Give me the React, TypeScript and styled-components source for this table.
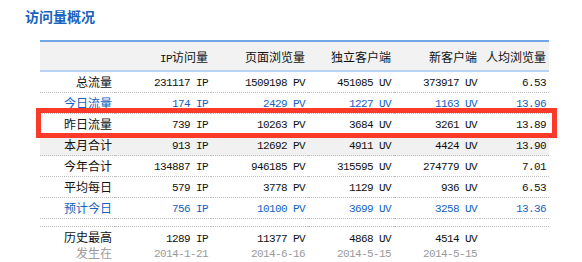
import styled, { createGlobalStyle } from "styled-components";

const GlobalStyle = createGlobalStyle`
  body {
    margin: 0;
    background: #ffffff;
    font-family: "Noto Sans CJK SC", "Liberation Sans", sans-serif;
    color: #111111;
  }
`;

type Tone = "normal" | "blue" | "shade";

interface IRow {
  label: string;
  ip: string;
  pv: string;
  uv: string;
  nuv: string;
  avg: string;
  tone: Tone;
}

const rows: IRow[] = [
  { label: "总流量", ip: "231117", pv: "1509198", uv: "451085", nuv: "373917", avg: "6.53", tone: "normal" },
  { label: "今日流量", ip: "174", pv: "2429", uv: "1227", nuv: "1163", avg: "13.96", tone: "blue" },
  { label: "昨日流量", ip: "739", pv: "10263", uv: "3684", nuv: "3261", avg: "13.89", tone: "normal" },
  { label: "本月合计", ip: "913", pv: "12692", uv: "4911", nuv: "4424", avg: "13.90", tone: "shade" },
  { label: "今年合计", ip: "134887", pv: "946185", uv: "315595", nuv: "274779", avg: "7.01", tone: "normal" },
  { label: "平均每日", ip: "579", pv: "3778", uv: "1129", nuv: "936", avg: "6.53", tone: "normal" },
  { label: "预计今日", ip: "756", pv: "10100", uv: "3699", nuv: "3258", avg: "13.36", tone: "blue" },
];

const Page = styled.div`
  padding: 7px 0 0 25px;
`;

const Title = styled.h2`
  margin: 0;
  font-size: 14px;
  line-height: 18px;
  font-weight: 700;
  color: #1763be;
`;

const TableWrap = styled.div`
  position: relative;
  margin: 15px 0 0 15px;
  width: 509px;
`;

const Table = styled.table`
  width: 509px;
  border-collapse: collapse;
  table-layout: fixed;
  font-size: 12px;
`;

const HeadRow = styled.tr`
  background: #f2f2f2;
  border-top: 2px solid #72a7ea;
  border-bottom: 2px solid #b9d3f2;
`;

const Th = styled.th`
  height: 28px;
  padding: 0 3px 0 0;
  text-align: right;
  font-weight: 400;
  white-space: nowrap;
`;

const Row = styled.tr<{ $tone: Tone }>`
  border-bottom: 1px dotted #bdbdbd;
  background: ${(p) => (p.$tone === "shade" ? "#f1f1f1" : "transparent")};
  color: ${(p) => (p.$tone === "blue" ? "#1462c0" : "#111111")};
`;

const Td = styled.td`
  height: 20px;
  padding: 0 3px 0 0;
  text-align: right;
  white-space: nowrap;
  line-height: 14px;
`;

const SpacerRow = styled.tr`
  border-bottom: 1px dotted #bdbdbd;
  height: 8px;
`;

const RecordRow = styled.tr`
  border-bottom: 1px dotted #bdbdbd;
`;

const RecordTd = styled.td`
  height: 33px;
  padding: 2px 3px 0 0;
  text-align: right;
  vertical-align: top;
  white-space: nowrap;
  line-height: 16px;
`;

const Num = styled.span`
  font-family: "Liberation Mono", monospace;
  font-size: 11px;
  letter-spacing: -0.6px;
  white-space: pre;
`;

const Sub = styled.div<{ $mono?: boolean }>`
  color: #9a9a9a;
  line-height: 15px;
  font-family: ${(p) => (p.$mono ? '"Liberation Mono", monospace' : "inherit")};
  font-size: ${(p) => (p.$mono ? "11px" : "12px")};
  letter-spacing: ${(p) => (p.$mono ? "-0.6px" : "0")};
`;

const Highlight = styled.div`
  position: absolute;
  left: -4px;
  top: 68px;
  width: 521px;
  height: 30px;
  box-sizing: border-box;
  border: 5px solid #fc3a2a;
  pointer-events: none;
`;

function App() {
  return (
    <Page>
      <GlobalStyle />
      <Title>访问量概况</Title>
      <TableWrap>
        <Table>
          <colgroup>
            <col style={{ width: 75 }} />
            <col style={{ width: 96 }} />
            <col style={{ width: 97 }} />
            <col style={{ width: 86 }} />
            <col style={{ width: 86 }} />
            <col style={{ width: 69 }} />
          </colgroup>
          <thead>
            <HeadRow>
              <Th />
              <Th>
                <Num>IP</Num>访问量
              </Th>
              <Th>页面浏览量</Th>
              <Th>独立客户端</Th>
              <Th>新客户端</Th>
              <Th>人均浏览量</Th>
            </HeadRow>
          </thead>
          <tbody>
            {rows.map((r) => (
              <Row key={r.label} $tone={r.tone}>
                <Td>{r.label}</Td>
                <Td>
                  <Num>{r.ip} IP</Num>
                </Td>
                <Td>
                  <Num>{r.pv} PV</Num>
                </Td>
                <Td>
                  <Num>{r.uv} UV</Num>
                </Td>
                <Td>
                  <Num>{r.nuv} UV</Num>
                </Td>
                <Td>
                  <Num>{r.avg}</Num>
                </Td>
              </Row>
            ))}
            <SpacerRow>
              <td colSpan={6} />
            </SpacerRow>
            <RecordRow>
              <RecordTd>
                历史最高
                <Sub>发生在</Sub>
              </RecordTd>
              <RecordTd>
                <Num>1289 IP</Num>
                <Sub $mono>2014-1-21</Sub>
              </RecordTd>
              <RecordTd>
                <Num>11377 PV</Num>
                <Sub $mono>2014-6-16</Sub>
              </RecordTd>
              <RecordTd>
                <Num>4868 UV</Num>
                <Sub $mono>2014-5-15</Sub>
              </RecordTd>
              <RecordTd>
                <Num>4514 UV</Num>
                <Sub $mono>2014-5-15</Sub>
              </RecordTd>
              <RecordTd />
            </RecordRow>
          </tbody>
        </Table>
        <Highlight />
      </TableWrap>
    </Page>
  );
}

export default App;
